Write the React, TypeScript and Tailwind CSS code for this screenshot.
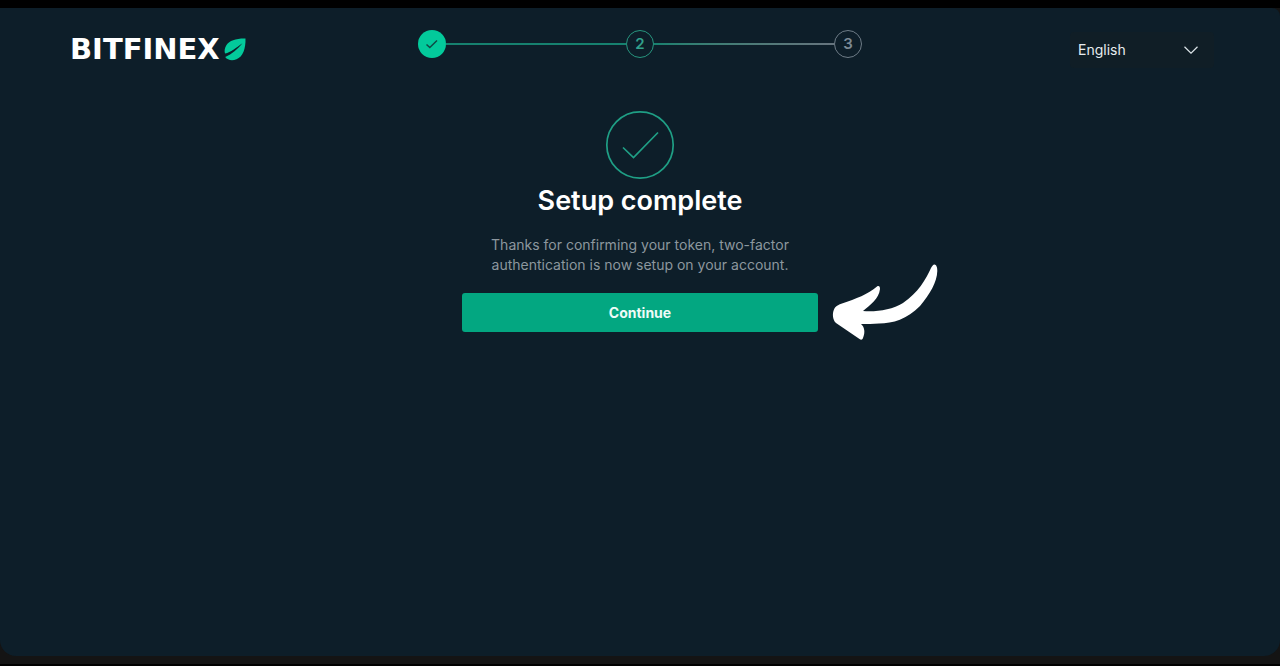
import React from "react";

function Logo() {
  return (
    <a href="/" aria-label="Bitfinex home" className="flex items-center gap-1 text-white">
      <span className="font-['DejaVu_Sans',sans-serif] text-[29px] leading-9 font-bold">BITFINEX</span>
      <svg viewBox="0 0 22 23" className="h-[23px] w-[22px]" aria-hidden="true">
        <path d="M21.500.5C12 .3 5.500 2.500 2.500 7 .6 10 .2 13 1 15.500 7 14.200 11.500 10 18.500 5.200 13.500 11 8 16 1.200 19 3.500 22.200 8 23 12.500 21.300 19 18.800 21.800 10.500 21.500.5Z" fill="#03ca9b" />
      </svg>
    </a>
  );
}

function Stepper() {
  return (
    <ol aria-label="Progress" className="flex items-center text-[15px] leading-5 font-semibold">
      <li className="flex size-7 items-center justify-center rounded-full bg-[#03ca9b]" aria-label="Step 1 complete">
        <svg viewBox="0 0 14 14" className="size-[14px]" fill="none" stroke="#0e4a45" strokeWidth="1.500">
          <path d="M1.500 7.500 4.800 10.500 12 3.500" />
        </svg>
      </li>
      <li aria-hidden="true" className="h-0.5 w-[180px] bg-[#16816f]" />
      <li aria-current="step" className="flex size-7 items-center justify-center rounded-full border border-[#27967f] text-[#32a18c]">2</li>
      <li aria-hidden="true" className="h-0.5 w-[180px] bg-linear-to-r from-[#16816f] to-[#66747e]" />
      <li className="flex size-7 items-center justify-center rounded-full border border-[#6e7c87] text-[#7c8a95]">3</li>
    </ol>
  );
}

function LanguageSelect() {
  return (
    <div className="relative flex items-center">
      <select aria-label="Language" defaultValue="en" className="h-9 w-36 appearance-none rounded-sm bg-[#101e26] px-2 text-sm text-[#e6ecef]">
        <option value="en">English</option>
      </select>
      <svg viewBox="0 0 14 8" className="pointer-events-none absolute right-4 h-2 w-[14px]" fill="none" stroke="#dce4e8" strokeWidth="1.200">
        <path d="M.5.8 7 7.200 13.500.8" />
      </svg>
    </div>
  );
}

function PointerArrow() {
  return (
    <svg viewBox="0 0 106 77" className="pointer-events-none absolute -top-[29px] left-full ml-[14px] h-[77px] w-[106px]" aria-hidden="true">
      <path
        d="M102 .500C104 0 105.500 3 105.300 7 105 18 98 30 88 42 75 55 61 59.500 47 59.500 41 60 35 60 29 60 32.500 63 33.500 68 31 74 30.300 76 29 76 27.500 75L4 59C.5 56 .2 49 2 45.500 3.500 42 6 41 10 39.500 24 35 36 30 45 22.500 47 21.500 48 22.500 48 25 47 35 38 41 31 47 44 48 60 46 71 39 86 29 94 15 99 4 100 2 101 1 102 .500Z"
        fill="white"
      />
    </svg>
  );
}

export default function App() {
  return (
    <div className="flex min-h-screen flex-col border-b-2 border-black bg-[#141414] pb-2 font-['Inter',sans-serif]">
      <div className="h-2 bg-black" />
      <div className="flex grow flex-col rounded-b-2xl rounded-tr-lg bg-[#0d1e29]">
        <header className="grid grid-cols-[1fr_auto_1fr] items-start px-[66px] pt-[22px]">
          <div className="pt-px pl-1">
            <Logo />
          </div>
          <Stepper />
          <div className="flex justify-end pt-0.5">
            <LanguageSelect />
          </div>
        </header>
        <main className="mx-auto flex w-full max-w-[356px] flex-col items-center pt-[42px] text-center">
          <svg viewBox="0 0 70 70" className="size-[70px]" fill="none" stroke="#1f9f85" strokeWidth="1.700" aria-hidden="true">
            <circle cx="35" cy="35" r="33.200" />
            <path d="M18 37.500 28.500 47.500 53 22.500" />
          </svg>
          <h1 className="mt-[3px] text-[27px] leading-9 font-semibold text-white">Setup complete</h1>
          <p className="mt-4 text-sm leading-5 text-[#8c979e]">
            Thanks for confirming your token, two-factor
            <br />
            authentication is now setup on your account.
          </p>
          <div className="relative mt-[18px] w-full">
            <button type="button" className="h-[39px] w-full rounded-[3px] bg-[#03a781] text-sm font-bold text-[#eefbf7]">
              Continue
            </button>
            <PointerArrow />
          </div>
        </main>
      </div>
    </div>
  );
}
